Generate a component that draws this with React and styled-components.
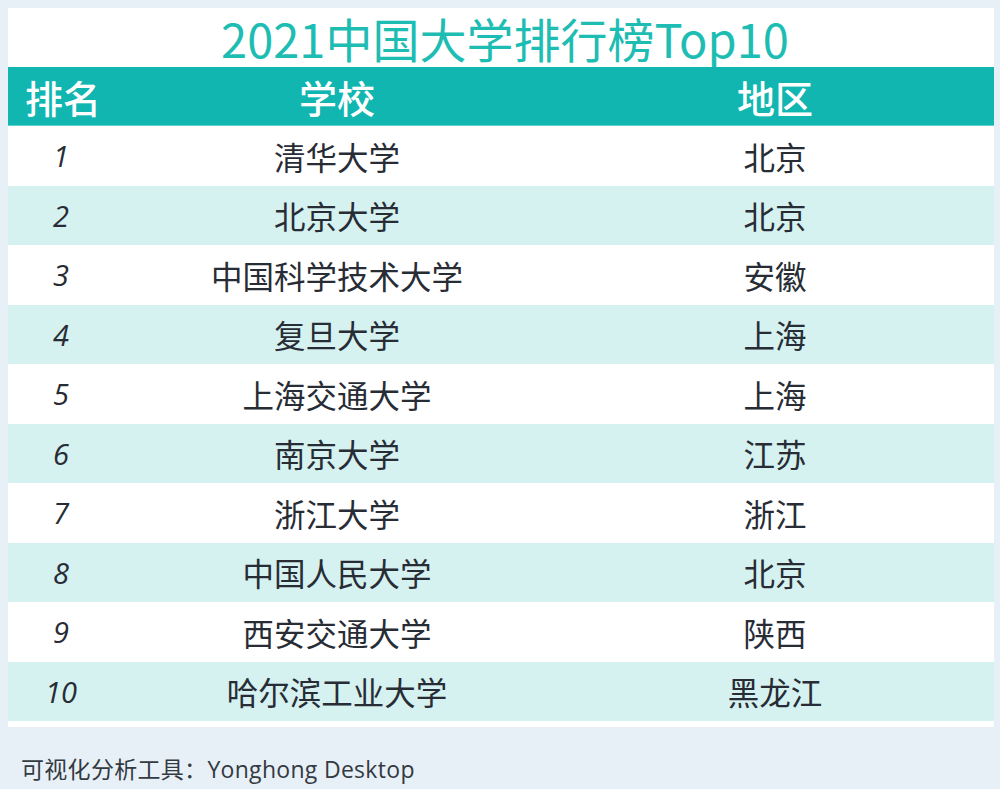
import React from 'react';
import styled, { createGlobalStyle } from 'styled-components';

const GlobalStyle = createGlobalStyle`
  html, body {
    margin: 0;
    padding: 0;
    background: #e8f0f7;
  }
  body {
    font-family: "Noto Sans CJK SC", "Noto Sans", sans-serif;
  }
`;

const Page = styled.div`
  width: 1000px;
  height: 789px;
  padding: 8px 6px 0 8px;
  box-sizing: border-box;
  background: #e8f0f7;
`;

const Card = styled.div`
  background: #fff;
  padding-bottom: 6px;
`;

const Title = styled.h1`
  margin: 0;
  height: 59px;
  line-height: 59px;
  text-align: center;
  font-size: 47px;
  font-weight: 400;
  color: #1ebdb3;
  padding-left: 8px;
`;

const Grid = styled.div`
  display: grid;
  grid-template-columns: 110px 438px 1fr;
`;

const HeadCell = styled.div`
  height: 59px;
  background: #12b6b1;
  color: #fff;
  font-size: 38px;
  font-weight: 500;
  display: flex;
  align-items: center;
  justify-content: center;
  border-bottom: 1px solid #5fcfcb;
  box-sizing: border-box;
`;

const Cell = styled.div`
  height: 59.5px;
  background: ${p => (p.$alt ? '#d5f1f0' : '#fff')};
  color: #272c35;
  font-size: 31.5px;
  display: flex;
  align-items: center;
  justify-content: center;
`;

const Rank = styled(Cell)`
  font-family: "Open Sans", "Noto Sans", sans-serif;
  font-style: italic;
  font-size: 29px;
  padding-right: 4px;
  box-sizing: border-box;
`;

const Footer = styled.div`
  padding: 24px 0 0 13px;
  font-family: "Open Sans", "Noto Sans CJK SC", sans-serif;
  font-size: 23px;
  letter-spacing: 0.3px;
  color: #333a42;
`;

const rows = [
  ['清华大学', '北京'],
  ['北京大学', '北京'],
  ['中国科学技术大学', '安徽'],
  ['复旦大学', '上海'],
  ['上海交通大学', '上海'],
  ['南京大学', '江苏'],
  ['浙江大学', '浙江'],
  ['中国人民大学', '北京'],
  ['西安交通大学', '陕西'],
  ['哈尔滨工业大学', '黑龙江'],
];

export default function App() {
  return (
    <Page>
      <GlobalStyle />
      <Card>
        <Title>2021中国大学排行榜Top10</Title>
        <Grid>
          <HeadCell>排名</HeadCell>
          <HeadCell>学校</HeadCell>
          <HeadCell>地区</HeadCell>
          {rows.map(([school, region], i) => (
            <React.Fragment key={school}>
              <Rank $alt={i % 2 === 1}>{i + 1}</Rank>
              <Cell $alt={i % 2 === 1}>{school}</Cell>
              <Cell $alt={i % 2 === 1}>{region}</Cell>
            </React.Fragment>
          ))}
        </Grid>
      </Card>
      <Footer>可视化分析工具：Yonghong Desktop</Footer>
    </Page>
  );
}
